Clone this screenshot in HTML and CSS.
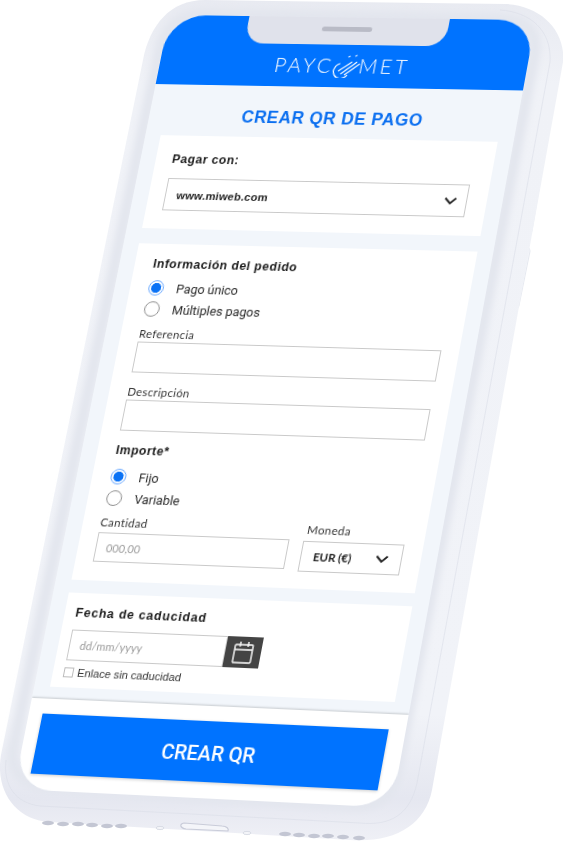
FILE: index.html
```html
<!DOCTYPE html>
<html lang="es">
<head>
  <meta charset="UTF-8">
  <meta name="viewport" content="width=device-width, initial-scale=1.0">
  <title>Crear QR de pago</title>
  <link rel="stylesheet" href="styles.css">
</head>
<body>
  <div class="scene">
    <!-- phone body, drawn in page coordinates -->
    <svg class="body" width="563" height="841" viewBox="0 0 563 841">
      <defs>
        <linearGradient id="shell" x1="0" y1="0" x2="0" y2="1">
          <stop offset="0" stop-color="#e8eaf1"/>
          <stop offset="0.1" stop-color="#f0f2f7"/>
          <stop offset="0.85" stop-color="#f1f3f8"/>
          <stop offset="0.95" stop-color="#e5e7f0"/>
          <stop offset="1" stop-color="#eff0f6"/>
        </linearGradient>
        <filter id="soft"><feGaussianBlur stdDeviation="3"/></filter>
      </defs>
      <line class="side-btn" x1="549" y1="117" x2="545" y2="145"/>
      <line class="side-btn-in" x1="549" y1="117" x2="545" y2="145"/>
      <line class="side-btn wide" x1="537" y1="177" x2="528" y2="230"/>
      <line class="side-btn-in wide" x1="537" y1="177" x2="528" y2="230"/>
      <line class="side-btn wide" x1="526" y1="251" x2="515" y2="305"/>
      <line class="side-btn-in wide" x1="526" y1="251" x2="515" y2="305"/>
      <path fill="url(#shell)" d="M205 0 L505 4 C540 5 566 30 563 62 L432 790 C425 825 395 843 350 840 L50 822 C15 820 -5 790 1 755 L143 60 C150 25 170 0 205 0 Z"/>
      <path class="shade" filter="url(#soft)" d="M205 14 L500 19 C525 20 538 30 534 55 L396 775 C390 800 375 806 350 805 L50 787 C22 785 8 770 14 745 L160 50 C165 28 180 14 205 14 Z"/>
      <path class="seam" d="M500 10 C530 12 552 30 550 62 L417 783 C410 815 390 826 360 823 L40 806 C15 803 3 785 6 760"/>
      <g class="grille">
        <ellipse cx="48" cy="823" rx="6" ry="2.200"/><ellipse cx="63" cy="824" rx="6" ry="2.200"/>
        <ellipse cx="78" cy="824" rx="6" ry="2.200"/><ellipse cx="92" cy="825" rx="6" ry="2.200"/>
        <ellipse cx="107" cy="826" rx="6" ry="2.200"/><ellipse cx="121" cy="826" rx="6" ry="2.200"/>
        <ellipse cx="285" cy="834" rx="6" ry="2.200"/><ellipse cx="299" cy="835" rx="6" ry="2.200"/>
        <ellipse cx="314" cy="836" rx="6" ry="2.200"/><ellipse cx="328" cy="836" rx="6" ry="2.200"/>
        <ellipse cx="343" cy="837" rx="6" ry="2.200"/><ellipse cx="359" cy="838" rx="6" ry="2.200"/>
      </g>
      <path class="port" d="M184 823 L222 826 C227 826 229 829 228 831 L186 829 C180 828 179 824 184 823 Z"/>
      <ellipse class="screw" cx="160" cy="828" rx="4" ry="1.600"/>
      <ellipse class="screw" cx="247" cy="833" rx="4" ry="1.600"/>
    </svg>

    <div class="screen">
      <header class="top">
        <div class="notch"><span class="speaker"></span></div>
        <div class="logo">
          <span>PAYC</span>
          <svg class="comet" width="30" height="26" viewBox="0 0 30 26">
            <path d="M8 11 A8 8 0 1 0 17 23"/>
            <path d="M7 19 L20 9 M10 22 L25 9 M14 23 L28 11"/>
            <path d="M15 4 L17 3 M22 3 L24 2"/>
          </svg>
          <span>MET</span>
        </div>
      </header>

      <main class="content">
        <h1 class="title">CREAR QR DE PAGO</h1>

        <section class="card card-pay">
          <h2 class="card-title">Pagar con:</h2>
          <div class="select select-web">
            <span>www.miweb.com</span>
            <svg class="chev" width="14" height="9" viewBox="0 0 14 9"><path d="M1.500 1.500 L7 7 L12.500 1.500"/></svg>
          </div>
        </section>

        <section class="card card-order">
          <h2 class="card-title">Información del pedido</h2>
          <label class="radio radio-first"><input type="radio" name="tipo" checked><span>Pago único</span></label>
          <label class="radio"><input type="radio" name="tipo"><span>Múltiples pagos</span></label>

          <label class="field-label label-ref">Referencia</label>
          <input class="field" type="text">
          <label class="field-label label-desc">Descripción</label>
          <input class="field" type="text">

          <h2 class="card-title amount-title">Importe*</h2>
          <label class="radio radio-amount"><input type="radio" name="importe" checked><span>Fijo</span></label>
          <label class="radio"><input type="radio" name="importe"><span>Variable</span></label>

          <div class="amount-row">
            <div class="amount-col">
              <label class="field-label">Cantidad</label>
              <input class="field" type="text" placeholder="000,00">
            </div>
            <div class="currency-col">
              <label class="field-label">Moneda</label>
              <div class="select select-cur">
                <span>EUR (€)</span>
                <svg class="chev" width="14" height="9" viewBox="0 0 14 9"><path d="M1.500 1.500 L7 7 L12.500 1.500"/></svg>
              </div>
            </div>
          </div>
        </section>

        <section class="card card-date">
          <h2 class="card-title">Fecha de caducidad</h2>
          <div class="date-row">
            <input class="field" type="text" placeholder="dd/mm/yyyy">
            <span class="cal">
              <svg width="24" height="26" viewBox="0 0 24 26">
                <rect x="3" y="5" width="18" height="18" rx="1"/>
                <path d="M3 10 H21 M8 2 V7 M16 2 V7"/>
              </svg>
            </span>
          </div>
          <label class="check"><input type="checkbox"><span>Enlace sin caducidad</span></label>
        </section>
      </main>

      <footer class="bottom">
        <button class="btn">CREAR QR</button>
      </footer>
    </div>
  </div>
</body>
</html>
```

FILE: styles.css
```css
* {
  box-sizing: border-box;
}

body {
  margin: 0;
  background: #fff;
  font-family: "Liberation Sans", Arial, sans-serif;
}

.scene {
  position: relative;
  width: 563px;
  height: 841px;
  overflow: hidden;
}

.body {
  position: absolute;
  top: 0;
  left: 0;
}

.side-btn {
  stroke: #e6e9f0;
  stroke-width: 5;
  stroke-linecap: round;
}

.side-btn-in {
  stroke: #f5f7fb;
  stroke-width: 3;
  stroke-linecap: round;
}

.side-btn.wide {
  stroke-width: 9;
}

.side-btn-in.wide {
  stroke-width: 7;
}

.shade {
  fill: none;
  stroke: #e3e6ee;
  stroke-width: 12;
}

.seam {
  fill: none;
  stroke: #dadde7;
  stroke-width: 0.6;
}

.grille {
  fill: #c3c6d3;
}

.port {
  fill: #f4f5f9;
  stroke: #c9ccd9;
  stroke-width: 1.2;
}

.screw {
  fill: #f4f5f9;
  stroke: #d2d5e0;
  stroke-width: 0.8;
}

/* the screen is laid out flat, then projected onto the tilted phone */
.screen {
  position: absolute;
  top: 0;
  left: 0;
  width: 380px;
  height: 800px;
  display: flex;
  flex-direction: column;
  border-radius: 38px;
  overflow: hidden;
  background: #f2f6fb;
  transform-origin: 0 0;
  transform: matrix3d(0.94112, 0.013097, 0, -0.00004212, -0.19564, 0.93057, 0, -0.00004697, 0, 0, 1, 0, 169.6, 14.9, 0, 1);
  filter: blur(0.3px);
}

.top {
  position: relative;
  flex: 0 0 74px;
  background: #0073ff;
  padding-top: 38px;
}

.notch {
  position: absolute;
  top: 0;
  left: 84px;
  width: 208px;
  height: 29px;
  background: #e0e2eb;
  border-radius: 0 0 20px 20px;
  display: flex;
  justify-content: center;
  padding-top: 10px;
}

.speaker {
  width: 52px;
  height: 5px;
  border-radius: 3px;
  background: #b9bbc6;
}

.logo {
  display: flex;
  justify-content: center;
  align-items: center;
  height: 26px;
  color: #fff;
  font-family: Lato, sans-serif;
  font-weight: 300;
  font-size: 21px;
  line-height: 26px;
  letter-spacing: 3px;
}

.comet {
  fill: none;
  stroke: #fff;
  stroke-width: 1.3;
  margin: 0 -2px 0 -2px;
}

.content {
  flex: 1;
  padding: 0 16px;
  display: flex;
  flex-direction: column;
}

.title {
  margin: 0;
  height: 54px;
  padding-top: 24px;
  text-align: center;
  color: #0b6ff0;
  font-size: 17.5px;
  line-height: 18px;
  font-weight: bold;
  letter-spacing: 0.6px;
}

.card {
  background: #fff;
  width: 348px;
}

.card-title {
  margin: 0;
  color: #1c1c1c;
  font-size: 12.5px;
  line-height: 16px;
  font-weight: bold;
  letter-spacing: 0.52px;
}

.card-pay {
  height: 98px;
  padding: 17px 20px 0 17px;
}

.card-order {
  height: 347px;
  margin-top: 16px;
  padding: 13px 18px 0 19px;
}

.card-date {
  height: 95px;
  margin-top: 13px;
  padding: 12px 18px 0 11px;
}

.card-date .card-title {
  letter-spacing: 0.8px;
}

.select {
  display: flex;
  justify-content: space-between;
  align-items: center;
  background: #fff;
  border: 1px solid #c9c9c9;
}

.select-web {
  height: 34px;
  margin-top: 12px;
  padding: 1px 9px 0 11px;
  font-size: 11.5px;
  font-weight: bold;
  letter-spacing: 0.2px;
  color: #222;
}

.select-cur {
  height: 31px;
  padding: 0 12px;
  font-family: Lato, sans-serif;
  font-size: 11.5px;
  font-weight: 700;
  color: #222;
}

.chev {
  fill: none;
  stroke: #1c1c1c;
  stroke-width: 1.8;
}

.radio {
  display: flex;
  align-items: center;
  height: 22px;
  color: #2a2a2a;
  font-family: Roboto, sans-serif;
  font-size: 12.8px;
}

.radio-first {
  margin-top: 6px;
}

.radio-amount {
  margin-top: 8px;
}

.radio input {
  appearance: none;
  width: 16px;
  height: 16px;
  margin: 0 13px 0 0;
  border: 1px solid #8d8d8d;
  border-radius: 50%;
  background: #fff;
}

.radio input:checked {
  border-color: #6aa9ff;
  background: radial-gradient(circle, #0a72f5 0, #0a72f5 4.8px, #fff 5.4px);
}

.field-label {
  display: block;
  color: #333;
  font-family: Lato, sans-serif;
  font-size: 11.5px;
  line-height: 14px;
  letter-spacing: 0.4px;
}

.label-ref {
  margin-top: 8px;
}

.label-desc {
  margin-top: 13px;
}

.field {
  display: block;
  width: 100%;
  height: 32px;
  margin: 1px 0 0;
  padding: 0 10px;
  background: #fff;
  border: 1px solid #c9c9c9;
  border-radius: 0;
  font-family: Lato, sans-serif;
  font-size: 11px;
  letter-spacing: 0.1px;
}

.field::placeholder {
  color: #9a9a9a;
  opacity: 1;
}

.amount-title {
  margin-top: 12px;
}

.amount-row {
  display: flex;
  align-items: flex-end;
  gap: 14px;
  margin-top: 7px;
  margin-left: -1px;
}

.amount-col {
  flex: 0 0 195px;
}

.amount-col .field {
  height: 30px;
  margin-top: 3px;
}

.currency-col {
  flex: 0 0 102px;
  margin-bottom: -2px;
}

.currency-col .field-label {
  margin: 0 0 4px 2px;
}

.date-row {
  display: flex;
  width: 195px;
  height: 31px;
  margin-top: 9px;
}

.date-row .field {
  flex: 1;
  height: 31px;
  margin: 0;
  min-width: 0;
}

.cal {
  flex: 0 0 36px;
  display: flex;
  align-items: center;
  justify-content: center;
  background: #444;
}

.cal svg {
  fill: none;
  stroke: #fff;
  stroke-width: 1.4;
}

.check {
  display: flex;
  align-items: center;
  margin-top: 5px;
  height: 13px;
  color: #333;
  font-size: 11.2px;
}

.check input {
  appearance: none;
  width: 10px;
  height: 10px;
  margin: 0 4px 0 0;
  background: #fff;
  border: 1px solid #bbb;
}

.bottom {
  flex: 0 0 91px;
  padding: 15px 14px 0;
  background: #fff;
  box-shadow: 0 -1px 2px rgba(0, 0, 0, 0.18);
}

.btn {
  display: block;
  width: 349px;
  height: 60px;
  padding: 4px 0 0;
  border: none;
  background: #0073ff;
  color: #fff;
  font-family: Roboto, sans-serif;
  font-size: 20px;
  font-weight: 500;
  box-shadow: 0 1px 3px rgba(0, 0, 0, 0.2);
}
```
